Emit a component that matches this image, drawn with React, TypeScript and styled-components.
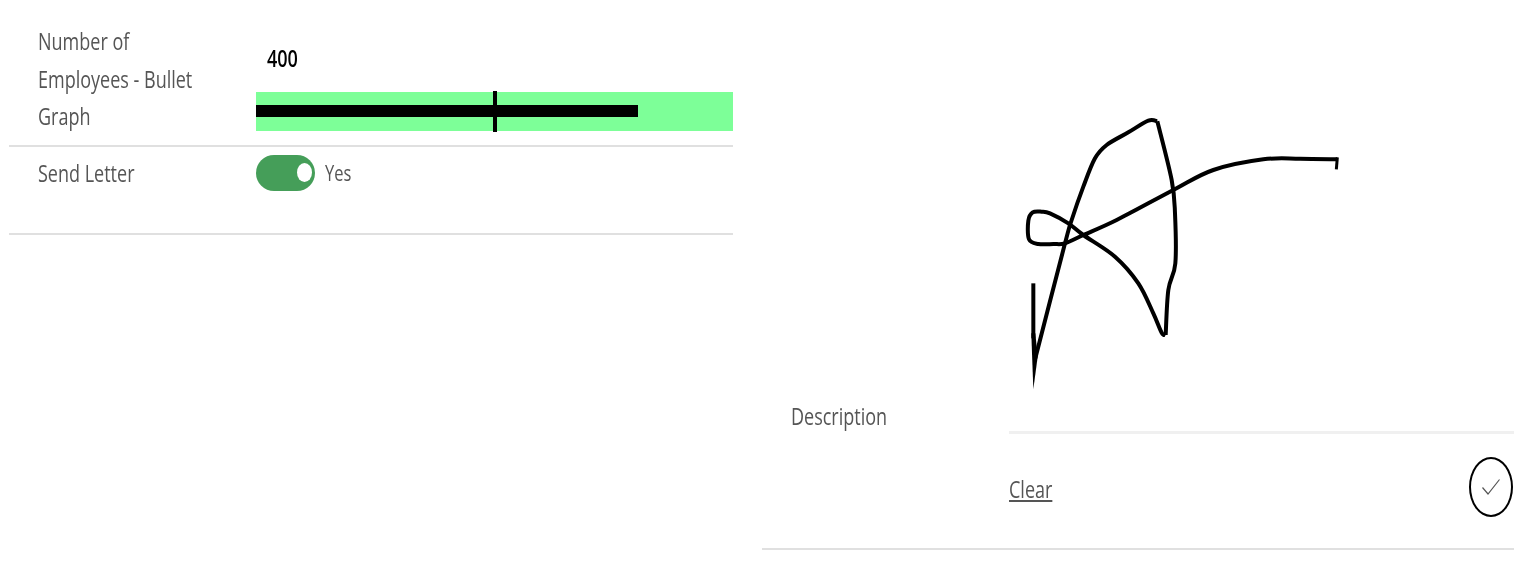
import React from "react";
import styled, { createGlobalStyle } from "styled-components";

const Global = createGlobalStyle`
  html, body { margin: 0; padding: 0; background: #fff; }
  body { font-family: "Open Sans", "Liberation Sans", sans-serif; overflow: hidden; }
`;

const Page = styled.div`
  display: flex;
  gap: 29px;
  width: 1526px;
  height: 568px;
  padding-left: 9px;
  box-sizing: border-box;
`;

const Column = styled.section<{ $width: number; $top: number }>`
  width: ${(p) => p.$width}px;
  padding-top: ${(p) => p.$top}px;
  flex: none;
`;

const Row = styled.div<{ $height: number; $top: number }>`
  display: grid;
  grid-template-columns: 218px 1fr;
  height: ${(p) => p.$height}px;
  padding: ${(p) => p.$top}px 0 0 29px;
  box-sizing: border-box;
  border-bottom: 2px solid #e0e0e0;
`;

const Text = styled.div<{ $size?: number; $color?: string; $weight?: number }>`
  font-size: ${(p) => p.$size ?? 24}px;
  font-weight: ${(p) => p.$weight ?? 400};
  line-height: 37.5px;
  color: ${(p) => p.$color ?? "#555"};
  transform: scaleX(0.75);
  transform-origin: left center;
  white-space: nowrap;
  filter: blur(0.3px);
`;

const BulletCell = styled.div`
  display: flex;
  flex-direction: column;
`;

const BulletValue = styled(Text)`
  margin: 17px 0 0 11px;
  height: 53px;
`;

const BulletTrack = styled.div`
  position: relative;
  height: 39px;
  background: #7dff98;
`;

const BulletBar = styled.div`
  position: absolute;
  left: 0;
  top: 13px;
  width: 382px;
  height: 12px;
  background: #000;
`;

const BulletMarker = styled.div`
  position: absolute;
  left: 237px;
  top: -1px;
  width: 4px;
  height: 41px;
  background: #000;
`;

const ToggleRow = styled.div`
  display: flex;
  align-items: flex-start;
  gap: 10px;
  margin-top: 1px;
`;

const Toggle = styled.div`
  position: relative;
  width: 59px;
  height: 36px;
  border-radius: 18px;
  background: #459e59;
  flex: none;
`;

const Knob = styled.span`
  position: absolute;
  left: 41px;
  top: 8px;
  width: 15px;
  height: 19px;
  border-radius: 50%;
  background: #fff;
`;

const ToggleLabel = styled(Text)`
  margin-top: -1px;
`;

const SignatureRow = styled(Row)`
  align-items: start;
`;

const LabelCell = styled.div`
  padding-top: 297px;
`;

const SignatureCell = styled.div`
  display: flex;
  flex-direction: column;
`;

const SignatureSvg = styled.svg`
  display: block;
  width: 360px;
  height: 300px;
  margin-left: -9px;
`;

const SignatureArea = styled.div`
  height: 331px;
  border-bottom: 3px solid #f0f0f0;
`;

const Actions = styled.div`
  display: flex;
  justify-content: space-between;
  align-items: flex-start;
  padding-top: 23px;
`;

const ClearLink = styled(Text).attrs({ as: "a" })`
  display: block;
  margin-top: 13px;
  text-decoration: underline;
  text-underline-offset: 2px;
  font-weight: 500;
`;

const ConfirmButton = styled.div`
  display: flex;
  align-items: center;
  justify-content: center;
  width: 44px;
  height: 60px;
  margin-right: 1px;
  border: 2.5px solid #000;
  border-radius: 50%;
  box-sizing: border-box;
`;

type Pt = [number, number];

// Catmull-Rom curve through the sampled points of a pen stroke.
function smooth(points: Pt[]): string {
  let d = `M${points[0][0]} ${points[0][1]}`;
  for (let i = 0; i < points.length - 1; i++) {
    const p0 = points[Math.max(i - 1, 0)];
    const p1 = points[i];
    const p2 = points[i + 1];
    const p3 = points[Math.min(i + 2, points.length - 1)];
    const c1x = p1[0] + (p2[0] - p0[0]) / 6;
    const c1y = p1[1] + (p2[1] - p0[1]) / 6;
    const c2x = p2[0] - (p3[0] - p1[0]) / 6;
    const c2y = p2[1] - (p3[1] - p1[1]) / 6;
    d += ` C${c1x} ${c1y} ${c2x} ${c2y} ${p2[0]} ${p2[1]}`;
  }
  return d;
}

const UP: Pt[] = [
  [106, 775], [195, 430], [215, 360], [250, 260], [285, 175], [320, 135], [385, 97], [445, 62], [472, 64],
];
const DOWN: Pt[] = [
  [472, 64], [515, 240], [525, 340], [526, 490], [505, 570], [497, 705],
];
const BACK: Pt[] = [
  [497, 705], [485, 698], [460, 640], [415, 550], [345, 470], [250, 405], [205, 370], [150, 340], [125, 335],
  [98, 337], [85, 362], [87, 418], [115, 432], [160, 432], [195, 430], [250, 405], [350, 360], [520, 270],
  [640, 210], [790, 178], [900, 176], [1012, 178],
];

export default function App() {
  return (
    <Page>
      <Global />
      <Column $width={724} $top={22}>
        <Row $height={125} $top={0}>
          <Text>
            Number of
            <br />
            Employees - Bullet
            <br />
            Graph
          </Text>
          <BulletCell>
            <BulletValue $color="#000" $weight={600}>400</BulletValue>
            <BulletTrack>
              <BulletBar />
              <BulletMarker />
            </BulletTrack>
          </BulletCell>
        </Row>
        <Row $height={88} $top={7}>
          <Text>Send Letter</Text>
          <ToggleRow>
            <Toggle>
              <Knob />
            </Toggle>
            <ToggleLabel $size={22}>Yes</ToggleLabel>
          </ToggleRow>
        </Row>
      </Column>
      <Column $width={752} $top={100}>
        <SignatureRow $height={450} $top={0}>
          <LabelCell>
            <Text>Description</Text>
          </LabelCell>
          <SignatureCell>
            <SignatureArea>
              <SignatureSvg viewBox="0 0 1080 900">
                <g fill="none" stroke="#000" strokeWidth="12" strokeLinejoin="round">
                  <path d="M100 550 L100 715" />
                  <path d={smooth(UP)} />
                  <path d={smooth(DOWN)} />
                  <path d={smooth(BACK)} />
                  <path d="M1012 172 L1009 208" strokeWidth="9" />
                </g>
                <path d="M94 700 L106 700 L113 770 L100 868 L96 760 Z" fill="#000" />
              </SignatureSvg>
            </SignatureArea>
            <Actions>
              <ClearLink>Clear</ClearLink>
              <ConfirmButton>
                <svg width="20" height="20" viewBox="0 0 20 20">
                  <path d="M1.5 10.5 L7 17 L18.5 2.5" fill="none" stroke="#555" strokeWidth="1.2" />
                </svg>
              </ConfirmButton>
            </Actions>
          </SignatureCell>
        </SignatureRow>
      </Column>
    </Page>
  );
}
